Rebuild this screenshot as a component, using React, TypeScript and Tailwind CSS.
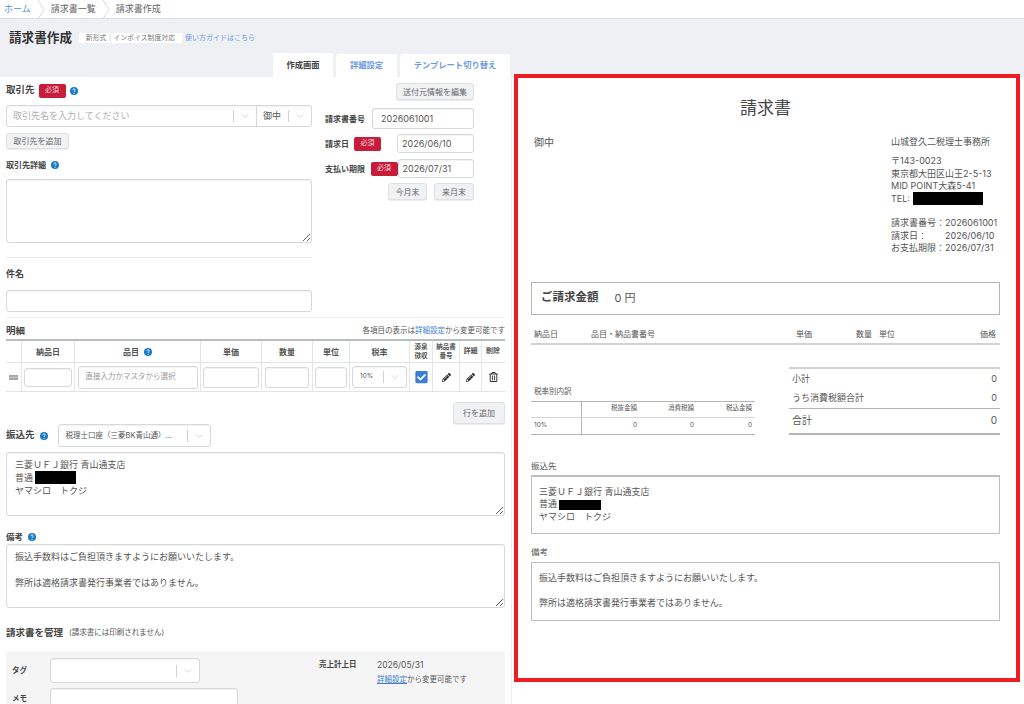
import React from "react";
import { ChevronDown } from "lucide-react";
import { FaCheckSquare, FaPencilAlt, FaRegTrashAlt } from "react-icons/fa";

const fieldCls = "border border-[#d5d8dc] rounded-[3px] bg-white shadow-[inset_0_1px_1px_rgba(0,0,0,0.05)]";
const btnCls = "flex items-center justify-center border border-[#dde0e4] rounded-[3px] bg-[#f1f2f4] text-[8px] text-[#666] shadow-[0_1px_0_rgba(0,0,0,0.08)]";
const labelCls = "font-bold text-[#444]";

const Help = ({ size = 8 }: { size?: number }) => (
  <svg width={size} height={size} viewBox="0 0 16 16" className="shrink-0">
    <circle cx="8" cy="8" r="8" fill="#1a7cc0" />
    <path d="M5.6 6.2a2.4 2.4 0 1 1 3.6 2.1c-.8.5-1.2.9-1.2 1.7" fill="none" stroke="#fff" strokeWidth="1.8" />
    <circle cx="8" cy="12.4" r="1.1" fill="#fff" />
  </svg>
);

const Required = ({ className }: { className: string }) => (
  <span className={`flex h-[14px] w-[27px] shrink-0 items-center justify-center rounded-[2px] bg-[#c71c3a] text-[7px] text-[#f8d6dc] ${className}`}>必須</span>
);

const Chevron = () => (
  <span className="flex items-center">
    <span className="h-[12px] w-px bg-[#d0d3d6]" />
    <ChevronDown className="mx-[5px] h-[12px] w-[12px] text-[#b5b8bc]" strokeWidth={1.2} />
  </span>
);

const Crumb = () => (
  <svg width="8" height="19" viewBox="0 0 8 19" className="mx-[6px] shrink-0">
    <path d="M1 0l6 9.5L1 19" fill="none" stroke="#d8dadd" />
  </svg>
);

const Redacted = ({ className }: { className: string }) => (
  <span className={`inline-block bg-black align-middle ${className}`} />
);

const columns = [
  { w: "w-[16px]", text: "" },
  { w: "w-[53px]", text: "納品日" },
  { w: "w-[126px]", text: "品目" },
  { w: "w-[61px]", text: "単価" },
  { w: "w-[51px]", text: "数量" },
  { w: "w-[37px]", text: "単位" },
  { w: "w-[60px]", text: "税率" },
  { w: "w-[23px]", text: "源泉徴収" },
  { w: "w-[27px]", text: "納品書番号" },
  { w: "w-[22px]", text: "詳細" },
  { w: "w-[22px]", text: "削除" },
];

const Form = () => (
  <div className="flex-1 bg-white px-[6px] text-[9px] text-[#555]">
    <div className="flex">
      <div className="w-[306px]">
        <div className="mt-[7px] flex h-[13px] items-center">
          <span className={`${labelCls} text-[9.5px]`}>取引先</span>
          <Required className="ml-[4px]" />
          <span className="ml-[4px]"><Help /></span>
        </div>
        <div className={`${fieldCls} mt-[8px] flex h-[22px] items-center`}>
          <span className="ml-[6px] flex-1 text-[#b0b0b0]">取引先名を入力してください</span>
          <Chevron />
          <span className="flex h-full items-center border-l border-[#d5d8dc] pl-[6px]">
            <span className="w-[25px]">御中</span>
            <Chevron />
          </span>
        </div>
        <div className={`${btnCls} mt-[6px] h-[16px] w-[63px]`}>取引先を追加</div>
        <div className={`${labelCls} mt-[10px] flex h-[12px] items-center gap-[5px] text-[8px]`}>
          取引先詳細 <Help />
        </div>
        <textarea className={`${fieldCls} mt-[8px] block h-[64px] w-full`} />
        <div className="mt-[14px] h-px bg-[#e8e9eb]" />
        <div className={`${labelCls} mt-[10px] h-[12px] text-[9px] leading-[12px]`}>件名</div>
        <div className={`${fieldCls} mt-[10px] h-[22px]`} />
      </div>
      <div className="ml-[13px] w-[149px]">
        <div className={`${btnCls} ml-auto mt-[6px] h-[17px] w-[78px]`}>送付元情報を編集</div>
        <div className="mt-[8px] flex h-[21px] items-center justify-between">
          <span className={`${labelCls} text-[8px]`}>請求書番号</span>
          <div className={`${fieldCls} flex h-full w-[102px] items-center pl-[8px] text-[9px]`}>2026061001</div>
        </div>
        <div className="mt-[5px] flex h-[19px] items-center">
          <span className={`${labelCls} w-[29px] text-[8px]`}>請求日</span>
          <Required />
          <div className={`${fieldCls} ml-auto flex h-full w-[77px] items-center pl-[4px]`}>2026/06/10</div>
        </div>
        <div className="mt-[6px] flex h-[19px] items-center">
          <span className={`${labelCls} w-[46px] text-[8px]`}>支払い期限</span>
          <Required />
          <div className={`${fieldCls} ml-auto flex h-full w-[77px] items-center pl-[4px]`}>2026/07/31</div>
        </div>
        <div className="mt-[5px] flex justify-end gap-[7px]">
          <div className={`${btnCls} h-[17px] w-[39px]`}>今月末</div>
          <div className={`${btnCls} h-[17px] w-[40px]`}>来月末</div>
        </div>
      </div>
    </div>

    <div className="mt-[5px] h-px bg-[#eeeff1]" />
    <div className="mt-[7px] flex h-[12px] items-center justify-between">
      <span className={`${labelCls} text-[9.5px]`}>明細</span>
      <span className="text-[7.5px]">各項目の表示は<span className="text-[#3f7fd0]">詳細設定</span>から変更可能です</span>
    </div>
    <div className="mt-[2px] border-t-2 border-[#b9bcc0]">
      <div className="flex h-[22px] border-b border-[#e1e3e6]">
        {columns.map((c) => (
          <div key={c.text} className={`${c.w} flex shrink-0 items-center justify-center gap-[5px] border-r border-[#e4e6e8] text-center font-bold text-[#555] last:border-r-0 ${c.text.length > 3 ? "px-[2px] text-[6.5px] leading-[9px]" : c.w === "w-[22px]" ? "text-[7px]" : "text-[8px]"}`}>
            {c.text}
            {c.text === "品目" && <Help />}
          </div>
        ))}
      </div>
      <div className="flex h-[29px] border-b border-[#e1e3e6]">
        <div className="flex w-[16px] shrink-0 items-center justify-center border-r border-[#e4e6e8]">
          <span className="h-[5px] w-[9px] border-y-2 border-[#a5a7aa] bg-[#c5c7c9]" />
        </div>
        <div className="flex w-[53px] shrink-0 items-center justify-center border-r border-[#e4e6e8]">
          <div className={`${fieldCls} h-[19px] w-[48px]`} />
        </div>
        <div className="flex w-[126px] shrink-0 items-center justify-center border-r border-[#e4e6e8]">
          <div className={`${fieldCls} flex h-[23px] w-[120px] items-center pl-[7px] text-[7.5px] text-[#999]`}>直接入力かマスタから選択</div>
        </div>
        <div className="flex w-[61px] shrink-0 items-center justify-center border-r border-[#e4e6e8]">
          <div className={`${fieldCls} h-[21px] w-[56px]`} />
        </div>
        <div className="flex w-[51px] shrink-0 items-center justify-center border-r border-[#e4e6e8]">
          <div className={`${fieldCls} h-[21px] w-[44px]`} />
        </div>
        <div className="flex w-[37px] shrink-0 items-center justify-center border-r border-[#e4e6e8]">
          <div className={`${fieldCls} h-[21px] w-[32px]`} />
        </div>
        <div className="flex w-[60px] shrink-0 items-center justify-center border-r border-[#e4e6e8]">
          <div className={`${fieldCls} flex h-[22px] w-[55px] items-center justify-between pl-[7px] text-[6.5px]`}>
            10%
            <Chevron />
          </div>
        </div>
        <div className="flex w-[23px] shrink-0 items-center justify-center border-r border-[#e4e6e8]">
          <FaCheckSquare className="h-[14px] w-[13px] text-[#3b7dd8]" />
        </div>
        <div className="flex w-[27px] shrink-0 items-center justify-center border-r border-[#e4e6e8]">
          <FaPencilAlt className="h-[9px] w-[9px] text-[#333]" />
        </div>
        <div className="flex w-[22px] shrink-0 items-center justify-center border-r border-[#e4e6e8]">
          <FaPencilAlt className="h-[9px] w-[9px] text-[#333]" />
        </div>
        <div className="flex w-[22px] shrink-0 items-center justify-center">
          <FaRegTrashAlt className="h-[10px] w-[9px] text-[#333]" />
        </div>
      </div>
    </div>

    <div className={`${btnCls} ml-auto mt-[10px] h-[22px] w-[52px]`}>行を追加</div>
    <div className="flex h-[23px] items-center">
      <span className={`${labelCls} text-[9.5px]`}>振込先</span>
      <span className="ml-[5px]"><Help /></span>
      <div className={`${fieldCls} ml-[10px] flex h-full w-[153px] items-center justify-between pl-[7px] text-[7.5px]`}>
        税理士口座（三菱BK青山通）…
        <Chevron />
      </div>
    </div>
    <div className={`${fieldCls} mt-[5px] h-[64px] resize-y overflow-auto pl-[8px] pt-[5px] leading-[13px]`}>
      <div>三菱ＵＦＪ銀行 青山通支店</div>
      <div className="flex items-center gap-[2px]">普通 <Redacted className="h-[13px] w-[41px]" /></div>
      <div>ヤマシロ　トクジ</div>
    </div>
    <div className={`${labelCls} mt-[15px] flex h-[12px] items-center gap-[5px] text-[8.5px]`}>
      備考 <Help />
    </div>
    <textarea
      className={`${fieldCls} mt-px block h-[64px] w-full pl-[8px] pt-[5px] leading-[13px] outline-none`}
      readOnly
      defaultValue={"振込手数料はご負担頂きますようにお願いいたします。\n\n弊所は適格請求書発行事業者ではありません。"}
    />
    <div className="mt-[19px] flex h-[12px] items-center">
      <span className={`${labelCls} text-[9.5px]`}>請求書を管理</span>
      <span className="ml-[6px] text-[7.5px]">(請求書には印刷されません)</span>
    </div>
    <div className="mt-[12px] flex h-[80px] rounded-t-[3px] bg-[#f5f5f5] pl-[6px] pt-[7px]">
      <div className="w-[226px]">
        <div className="flex h-[25px] items-center">
          <span className={`${labelCls} w-[38px] text-[7.5px]`}>タグ</span>
          <div className={`${fieldCls} flex h-full w-[150px] items-center justify-end`}><Chevron /></div>
        </div>
        <div className="mt-[5px] flex h-[30px] items-start">
          <span className={`${labelCls} mt-[5px] w-[38px] text-[7.5px]`}>メモ</span>
          <div className={`${fieldCls} h-full w-[188px]`} />
        </div>
      </div>
      <div className="ml-[81px] mt-[1px] flex items-start">
        <span className={`${labelCls} w-[58px] text-[7.5px] leading-[12px]`}>売上計上日</span>
        <div>
          <div className="text-[8.5px] leading-[12px]">2026/05/31</div>
          <div className="mt-[3px] text-[7.5px] leading-[12px]"><span className="text-[#3f7fd0] underline">詳細設定</span>から変更可能です</div>
        </div>
      </div>
    </div>
  </div>
);

const Preview = () => (
  <div className="ml-[2px] mt-[55px] box-border h-[608px] w-[506px] border-4 border-[#ee1c25] bg-white pl-[13px] pr-[16px] text-[#555]">
    <div className="mt-[18px] h-[24px] text-center text-[17px] leading-[24px] text-[#444]">請求書</div>
    <div className="mt-[16px] flex text-[9px] leading-[12.5px]">
      <div className="ml-[3px] text-[10px]">御中</div>
      <div className="ml-auto w-[109px] whitespace-nowrap">
        <div className="h-[19px]">山城登久二税理士事務所</div>
        <div>〒143-0023</div>
        <div>東京都大田区山王2-5-13</div>
        <div>MID POINT大森5-41</div>
        <div className="flex h-[12.5px] items-center gap-[3px]">TEL: <Redacted className="h-[13px] w-[70px]" /></div>
        <div className="mt-[12px]">請求書番号：2026061001</div>
        <div className="flex"><span className="w-[54px]">請求日：</span>2026/06/10</div>
        <div>お支払期限：2026/07/31</div>
      </div>
    </div>
    <div className="mt-[27px] box-border flex h-[33px] items-center border border-[#b5b5b5] pl-[9px]">
      <span className="text-[11.5px] font-bold text-[#444]">ご請求金額</span>
      <span className="ml-[16px] text-[11px]">0 円</span>
    </div>
    <div className="mt-[13px] flex h-[17px] border-b-2 border-[#d2d2d2] text-[8px] leading-[12px]">
      <span className="ml-[3px] w-[57px]">納品日</span>
      <span className="w-[205px]">品目・納品書番号</span>
      <span className="w-[60px]">単価</span>
      <span className="w-[23px]">数量</span>
      <span>単位</span>
      <span className="ml-auto mr-[4px]">価格</span>
    </div>
    <div className="mt-[22px] flex">
      <div className="w-[224px] pt-[19px]">
        <div className="ml-[3px] h-[12px] text-[7.5px] leading-[12px]">税率別内訳</div>
        <div className="mt-[3px] border-y border-[#b5b5b5] text-[6.5px]">
          <div className="flex h-[16px] items-center border-b border-[#d5d5d5]">
            <div className="h-full w-[51px] border-r border-[#b5b5b5]" />
            <span className="w-[55px] text-right">税抜金額</span>
            <span className="w-[57px] text-right">消費税額</span>
            <span className="w-[58px] text-right">税込金額</span>
          </div>
          <div className="flex h-[16px] items-center">
            <div className="flex h-full w-[51px] items-center border-r border-[#b5b5b5] pl-[3px]">10%</div>
            <span className="w-[55px] text-right">0</span>
            <span className="w-[57px] text-right">0</span>
            <span className="w-[58px] text-right">0</span>
          </div>
        </div>
      </div>
      <div className="ml-auto h-[68px] w-[211px] border-y-2 border-[#d2d2d2] border-b-[#b5b5b5] text-[9px]">
        <div className="flex h-[20px] items-center justify-between px-[3px]"><span>小計</span><span>0</span></div>
        <div className="flex h-[20px] items-center justify-between border-b border-[#b5b5b5] px-[3px]"><span>うち消費税額合計</span><span>0</span></div>
        <div className="flex h-[24px] items-center justify-between px-[3px] text-[10px]"><span>合計</span><span>0</span></div>
      </div>
    </div>
    <div className="mt-[25px] h-[12px] text-[8.5px] leading-[12px]">振込先</div>
    <div className="mt-[3px] box-border h-[59px] border border-t-2 border-[#bdbdbd] pl-[7px] pt-[9px] text-[9px] leading-[12.7px]">
      <div>三菱ＵＦＪ銀行 青山通支店</div>
      <div className="flex items-center gap-[2px]">普通 <Redacted className="h-[10px] w-[42px]" /></div>
      <div>ヤマシロ　トクジ</div>
    </div>
    <div className="mt-[12px] h-[12px] text-[8.5px] leading-[12px]">備考</div>
    <div className="mt-[4px] box-border h-[59px] border border-[#bdbdbd] pl-[7px] pt-[9px] text-[9px] leading-[12.7px]">
      <div>振込手数料はご負担頂きますようにお願いいたします。</div>
      <div className="h-[12.7px]" />
      <div>弊所は適格請求書発行事業者ではありません。</div>
    </div>
  </div>
);

export default function App() {
  return (
    <div className="flex h-[704px] w-[1024px] flex-col overflow-hidden bg-white font-['Inter','Noto_Sans_CJK_JP',sans-serif]">
      <div className="flex h-[19px] shrink-0 items-center border-b border-[#dcdee2] pl-[4px] text-[9px] text-[#666]">
        <span className="text-[#5b8fd0]">ホーム</span>
        <Crumb />
        <span>請求書一覧</span>
        <Crumb />
        <span>請求書作成</span>
      </div>
      <div className="flex flex-1">
        <div className="flex w-[512px] flex-col border-r border-[#eef0f4]">
          <div className="h-[58px] shrink-0 bg-[#eef0f4]">
            <div className="flex h-[34px] items-center pl-[9px] pt-[4px]">
              <span className="text-[12.6px] font-bold text-[#333]">請求書作成</span>
              <span className="ml-[7px] flex h-[10px] w-[103px] items-center justify-center bg-white text-[6.9px] text-[#777]">新形式｜インボイス制度対応</span>
              <span className="ml-[3px] text-[7px] text-[#6f9ade]">使い方ガイドはこちら</span>
            </div>
            <div className="flex h-[24px] items-end justify-end gap-[3px] pr-px text-[8.3px] font-bold text-[#6f9ade]">
              <div className="flex h-[24px] w-[60px] items-center justify-center rounded-t-[2px] bg-white text-[#444]">作成画面</div>
              <div className="flex h-[23px] w-[61px] items-center justify-center rounded-t-[2px] bg-white">詳細設定</div>
              <div className="flex h-[23px] w-[110px] items-center justify-center rounded-t-[2px] bg-white">テンプレート切り替え</div>
            </div>
          </div>
          <Form />
        </div>
        <div className="relative flex-1">
          <div className="absolute inset-x-0 top-0 h-[58px] bg-[#eef0f4]" />
          <div className="relative">
            <Preview />
          </div>
        </div>
      </div>
    </div>
  );
}
